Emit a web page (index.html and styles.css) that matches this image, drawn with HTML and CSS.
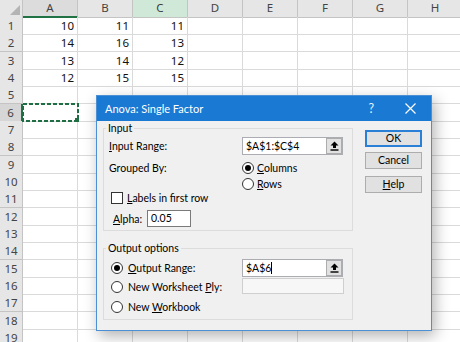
FILE: index.html
```html
<!DOCTYPE html>
<html>
<head>
<meta charset="utf-8">
<link rel="stylesheet" href="styles.css">
</head>
<body>
<div class="sheet">
  <div class="row hdrow"><div class="corner"><svg width="12" height="12" viewBox="0 0 12 12"><polygon points="11,1 11,11 1,11" fill="#b4b4b4"/></svg></div><div class="hd sel-col">A</div><div class="hd">B</div><div class="hd hl-col">C</div><div class="hd">D</div><div class="hd">E</div><div class="hd">F</div><div class="hd">G</div><div class="hd">H</div></div>
  <div class="row"><div class="rh">1</div><div class="c">10</div><div class="c">11</div><div class="c">11</div><div class="c"></div><div class="c"></div><div class="c"></div><div class="c"></div><div class="c"></div></div>
  <div class="row"><div class="rh">2</div><div class="c">14</div><div class="c">16</div><div class="c">13</div><div class="c"></div><div class="c"></div><div class="c"></div><div class="c"></div><div class="c"></div></div>
  <div class="row"><div class="rh">3</div><div class="c">13</div><div class="c">14</div><div class="c">12</div><div class="c"></div><div class="c"></div><div class="c"></div><div class="c"></div><div class="c"></div></div>
  <div class="row"><div class="rh">4</div><div class="c">12</div><div class="c">15</div><div class="c">15</div><div class="c"></div><div class="c"></div><div class="c"></div><div class="c"></div><div class="c"></div></div>
  <div class="row"><div class="rh">5</div><div class="c"></div><div class="c"></div><div class="c"></div><div class="c"></div><div class="c"></div><div class="c"></div><div class="c"></div><div class="c"></div></div>
  <div class="row"><div class="rh sel-row">6</div><div class="c active"><svg class="ants" width="57" height="19" viewBox="0 0 57 19"><rect x="1" y="1" width="55" height="17" fill="none" stroke="#1f6e43" stroke-width="2" stroke-dasharray="4 2"/><rect x="53" y="15" width="4" height="4" fill="#1f6e43"/></svg></div><div class="c"></div><div class="c"></div><div class="c"></div><div class="c"></div><div class="c"></div><div class="c"></div><div class="c"></div></div>
  <div class="row"><div class="rh">7</div><div class="c"></div><div class="c"></div><div class="c"></div><div class="c"></div><div class="c"></div><div class="c"></div><div class="c"></div><div class="c"></div></div>
  <div class="row"><div class="rh">8</div><div class="c"></div><div class="c"></div><div class="c"></div><div class="c"></div><div class="c"></div><div class="c"></div><div class="c"></div><div class="c"></div></div>
  <div class="row"><div class="rh">9</div><div class="c"></div><div class="c"></div><div class="c"></div><div class="c"></div><div class="c"></div><div class="c"></div><div class="c"></div><div class="c"></div></div>
  <div class="row"><div class="rh">10</div><div class="c"></div><div class="c"></div><div class="c"></div><div class="c"></div><div class="c"></div><div class="c"></div><div class="c"></div><div class="c"></div></div>
  <div class="row"><div class="rh">11</div><div class="c"></div><div class="c"></div><div class="c"></div><div class="c"></div><div class="c"></div><div class="c"></div><div class="c"></div><div class="c"></div></div>
  <div class="row"><div class="rh">12</div><div class="c"></div><div class="c"></div><div class="c"></div><div class="c"></div><div class="c"></div><div class="c"></div><div class="c"></div><div class="c"></div></div>
  <div class="row"><div class="rh">13</div><div class="c"></div><div class="c"></div><div class="c"></div><div class="c"></div><div class="c"></div><div class="c"></div><div class="c"></div><div class="c"></div></div>
  <div class="row"><div class="rh">14</div><div class="c"></div><div class="c"></div><div class="c"></div><div class="c"></div><div class="c"></div><div class="c"></div><div class="c"></div><div class="c"></div></div>
  <div class="row"><div class="rh">15</div><div class="c"></div><div class="c"></div><div class="c"></div><div class="c"></div><div class="c"></div><div class="c"></div><div class="c"></div><div class="c"></div></div>
  <div class="row"><div class="rh">16</div><div class="c"></div><div class="c"></div><div class="c"></div><div class="c"></div><div class="c"></div><div class="c"></div><div class="c"></div><div class="c"></div></div>
  <div class="row"><div class="rh">17</div><div class="c"></div><div class="c"></div><div class="c"></div><div class="c"></div><div class="c"></div><div class="c"></div><div class="c"></div><div class="c"></div></div>
  <div class="row"><div class="rh">18</div><div class="c"></div><div class="c"></div><div class="c"></div><div class="c"></div><div class="c"></div><div class="c"></div><div class="c"></div><div class="c"></div></div>
  <div class="row"><div class="rh">19</div><div class="c"></div><div class="c"></div><div class="c"></div><div class="c"></div><div class="c"></div><div class="c"></div><div class="c"></div><div class="c"></div></div>
</div>

<div class="dialog">
  <div class="titlebar">
    <span class="title">Anova: Single Factor</span>
    <span class="qmark">?</span>
    <svg class="close" width="11" height="11" viewBox="0 0 11 11"><path d="M0.5 0.5 L10.5 10.5 M10.5 0.5 L0.5 10.5" stroke="#fff" stroke-width="1.2"/></svg>
  </div>
  <div class="dbody">
    <div class="groups">
      <fieldset class="group g-input">
        <legend>Input</legend>
        <div class="frow r-range">
          <span class="lbl"><u>I</u>nput Range:</span>
          <span class="refbox"><span class="reftext">$A$1:$C$4</span><span class="refbtn"><svg width="9" height="10" viewBox="0 0 9 10"><path d="M4.5 0.5 L8.5 4.5 L6 4.5 L6 7 L3 7 L3 4.5 L0.5 4.5 Z" fill="#000"/><rect x="0.5" y="8.3" width="8" height="1.4" fill="#000"/></svg></span></span>
        </div>
        <div class="frow r-group">
          <span class="lbl">Grouped By:</span>
          <div class="radios">
            <div class="opt"><span class="radio on"></span><span><u>C</u>olumns</span></div>
            <div class="opt"><span class="radio"></span><span><u>R</u>ows</span></div>
          </div>
        </div>
        <div class="frow r-check">
          <span class="check"></span><span><u>L</u>abels in first row</span>
        </div>
        <div class="frow r-alpha">
          <span class="alpha-lbl"><u>A</u>lpha:</span>
          <span class="alphabox">0.05</span>
        </div>
      </fieldset>
      <fieldset class="group g-output">
        <legend>Output options</legend>
        <div class="frow o1">
          <span class="olbl"><span class="radio on"></span><span><u>O</u>utput Range:</span></span>
          <span class="refbox"><span class="reftext">$A$6<span class="caret"></span></span><span class="refbtn"><svg width="9" height="10" viewBox="0 0 9 10"><path d="M4.5 0.5 L8.5 4.5 L6 4.5 L6 7 L3 7 L3 4.5 L0.5 4.5 Z" fill="#000"/><rect x="0.5" y="8.3" width="8" height="1.4" fill="#000"/></svg></span></span>
        </div>
        <div class="frow o2">
          <span class="olbl"><span class="radio"></span><span>New Worksheet <u>P</u>ly:</span></span>
          <span class="disbox"></span>
        </div>
        <div class="frow o3">
          <span class="olbl"><span class="radio"></span><span>New <u>W</u>orkbook</span></span>
        </div>
      </fieldset>
    </div>
    <div class="buttons">
      <div class="btn default">OK</div>
      <div class="btn cancel">Cancel</div>
      <div class="btn help"><u>H</u>elp</div>
    </div>
  </div>
</div>
</body>
</html>
```
FILE: styles.css
```css
html, body {
  margin: 0;
  padding: 0;
}
body {
  width: 460px;
  height: 342px;
  overflow: hidden;
  position: relative;
  background: #fff;
  font-family: "Noto Sans", "Open Sans", sans-serif;
  color: #000;
}

/* ---------- spreadsheet ---------- */
.sheet {
  display: flex;
  flex-direction: column;
  font-size: 11.5px;
}
.row {
  display: grid;
  grid-template-columns: 23px repeat(8, 55px);
  height: 17.33px;
}
.hdrow {
  height: 17px;
}
.row > div {
  box-sizing: border-box;
  border-right: 1px solid #dadada;
  border-bottom: 1px solid #dadada;
  overflow: visible;
  white-space: nowrap;
}
.corner {
  background: #e6e6e6;
  display: flex;
  align-items: flex-end;
  justify-content: flex-end;
  border-color: #c4c4c4 !important;
}
.corner svg {
  display: block;
  margin: 0 1px 1px 0;
}
.row > .hd {
  background: #e6e6e6;
  border-color: #c4c4c4;
  color: #444;
  text-align: center;
  line-height: 16px;
}
.row > .hd.sel-col {
  background: #dcdcdc;
  border-bottom: 2px solid #217346;
  color: #444;
}
.row > .hd.hl-col {
  background: #d0e8d8;
  color: #3a3a3a;
}
.row > .rh {
  background: #e6e6e6;
  border-color: #c4c4c4;
  color: #444;
  text-align: center;
  line-height: 17px;
}
.row > .rh.sel-row {
  background: #d6d6d6;
  border-right: 2px solid #217346;
}
.row > .c {
  text-align: right;
  padding-right: 3px;
  line-height: 17px;
  color: #111;
}
.row > .c.active {
  position: relative;
}
.ants {
  position: absolute;
  left: -1px;
  top: -1px;
}

/* ---------- dialog ---------- */
.dialog {
  position: absolute;
  left: 96px;
  top: 95px;
  width: 336px;
  height: 236px;
  box-sizing: border-box;
  border: 1px solid #4b90d4;
  background: #f0f0f0;
  box-shadow: 3px 5px 14px rgba(0, 0, 0, 0.3);
  display: flex;
  flex-direction: column;
  font-family: Lato, "Noto Sans", sans-serif;
  font-size: 10.5px;
}
.titlebar {
  height: 25px;
  flex: none;
  background: #1979d3;
  color: #fff;
  display: flex;
  align-items: center;
  padding-left: 8px;
  padding-right: 15px;
}
.title {
  flex: 1;
  font-size: 11px;
}
.qmark {
  font-size: 12.5px;
  margin-right: 31px;
  color: #e8f1fb;
}
.close {
  display: block;
}
.dbody {
  display: flex;
  padding: 0 9px 0 6px;
  gap: 12px;
}
.groups {
  width: 250px;
  display: flex;
  flex-direction: column;
}
.group {
  margin: 0;
  padding: 0 0 0 5px;
  border: 1px solid #dcdcdc;
  min-width: 0;
}
.group legend {
  padding: 0 2px;
  margin-left: -3px;
  line-height: 14px;
  font-size: 10.5px;
}
.g-input {
  padding-bottom: 3px;
}
.g-output {
  margin-top: 10px;
  padding-bottom: 4px;
}
.frow {
  display: flex;
  align-items: center;
}
.lbl {
  width: 133px;
  flex: none;
}
.r-range {
  margin-top: 2px;
  height: 18px;
}
.r-group {
  margin-top: 5px;
  align-items: flex-start;
}
.r-group .lbl {
  line-height: 16px;
}
.radios {
  display: flex;
  flex-direction: column;
}
.opt {
  display: flex;
  align-items: center;
  height: 16px;
  gap: 3px;
}
.radio {
  width: 12px;
  height: 12px;
  box-sizing: border-box;
  border: 1px solid #333;
  border-radius: 50%;
  background: #fff;
  flex: none;
  display: flex;
  align-items: center;
  justify-content: center;
}
.radio.on::after {
  content: "";
  width: 6px;
  height: 6px;
  border-radius: 50%;
  background: #000;
}
.r-check {
  height: 12px;
  gap: 4px;
}
.check {
  width: 12px;
  height: 12px;
  box-sizing: border-box;
  border: 1px solid #333;
  background: #fff;
  margin-left: 2px;
  flex: none;
}
.r-alpha {
  margin-top: 6px;
  height: 17px;
}
.alpha-lbl {
  margin-left: 4px;
  width: 34px;
}
.alphabox {
  width: 44px;
  height: 17px;
  box-sizing: border-box;
  border: 1px solid #7a7a7a;
  background: #fff;
  padding-left: 3px;
  line-height: 15px;
}
.refbox {
  display: flex;
  width: 101px;
  height: 18px;
  box-sizing: border-box;
  border: 1px solid #abadb3;
  background: #fff;
}
.reftext {
  flex: 1;
  padding-left: 3px;
  line-height: 16px;
  display: flex;
  align-items: center;
}
.caret {
  display: inline-block;
  width: 1px;
  height: 12px;
  background: #000;
}
.refbtn {
  width: 16px;
  box-sizing: border-box;
  border: 1px solid #adadad;
  background: #e1e1e1;
  display: flex;
  align-items: center;
  justify-content: center;
}
.refbtn svg {
  display: block;
}
.olbl {
  width: 133px;
  flex: none;
  display: flex;
  align-items: center;
  gap: 5px;
}
.olbl .radio {
  margin-left: 2px;
}
.o1 {
  margin-top: 4px;
  height: 18px;
}
.o2 {
  margin-top: 1px;
  height: 17px;
  align-items: flex-start;
}
.o2 .olbl {
  height: 17px;
}
.disbox {
  width: 102px;
  height: 16px;
  box-sizing: border-box;
  border: 1px solid #cfcfcf;
  background: #f7f7f7;
}
.o3 {
  margin-top: 4px;
  height: 16px;
}
.buttons {
  width: 57px;
  display: flex;
  flex-direction: column;
  padding-top: 9px;
}
.btn {
  height: 17px;
  box-sizing: border-box;
  border: 1px solid #adadad;
  background: #e1e1e1;
  text-align: center;
  line-height: 15px;
}
.btn.default {
  border: 2px solid #2a7fd6;
  line-height: 13px;
}
.btn.cancel {
  margin-top: 5px;
}
.btn.help {
  margin-top: 7px;
}
```
